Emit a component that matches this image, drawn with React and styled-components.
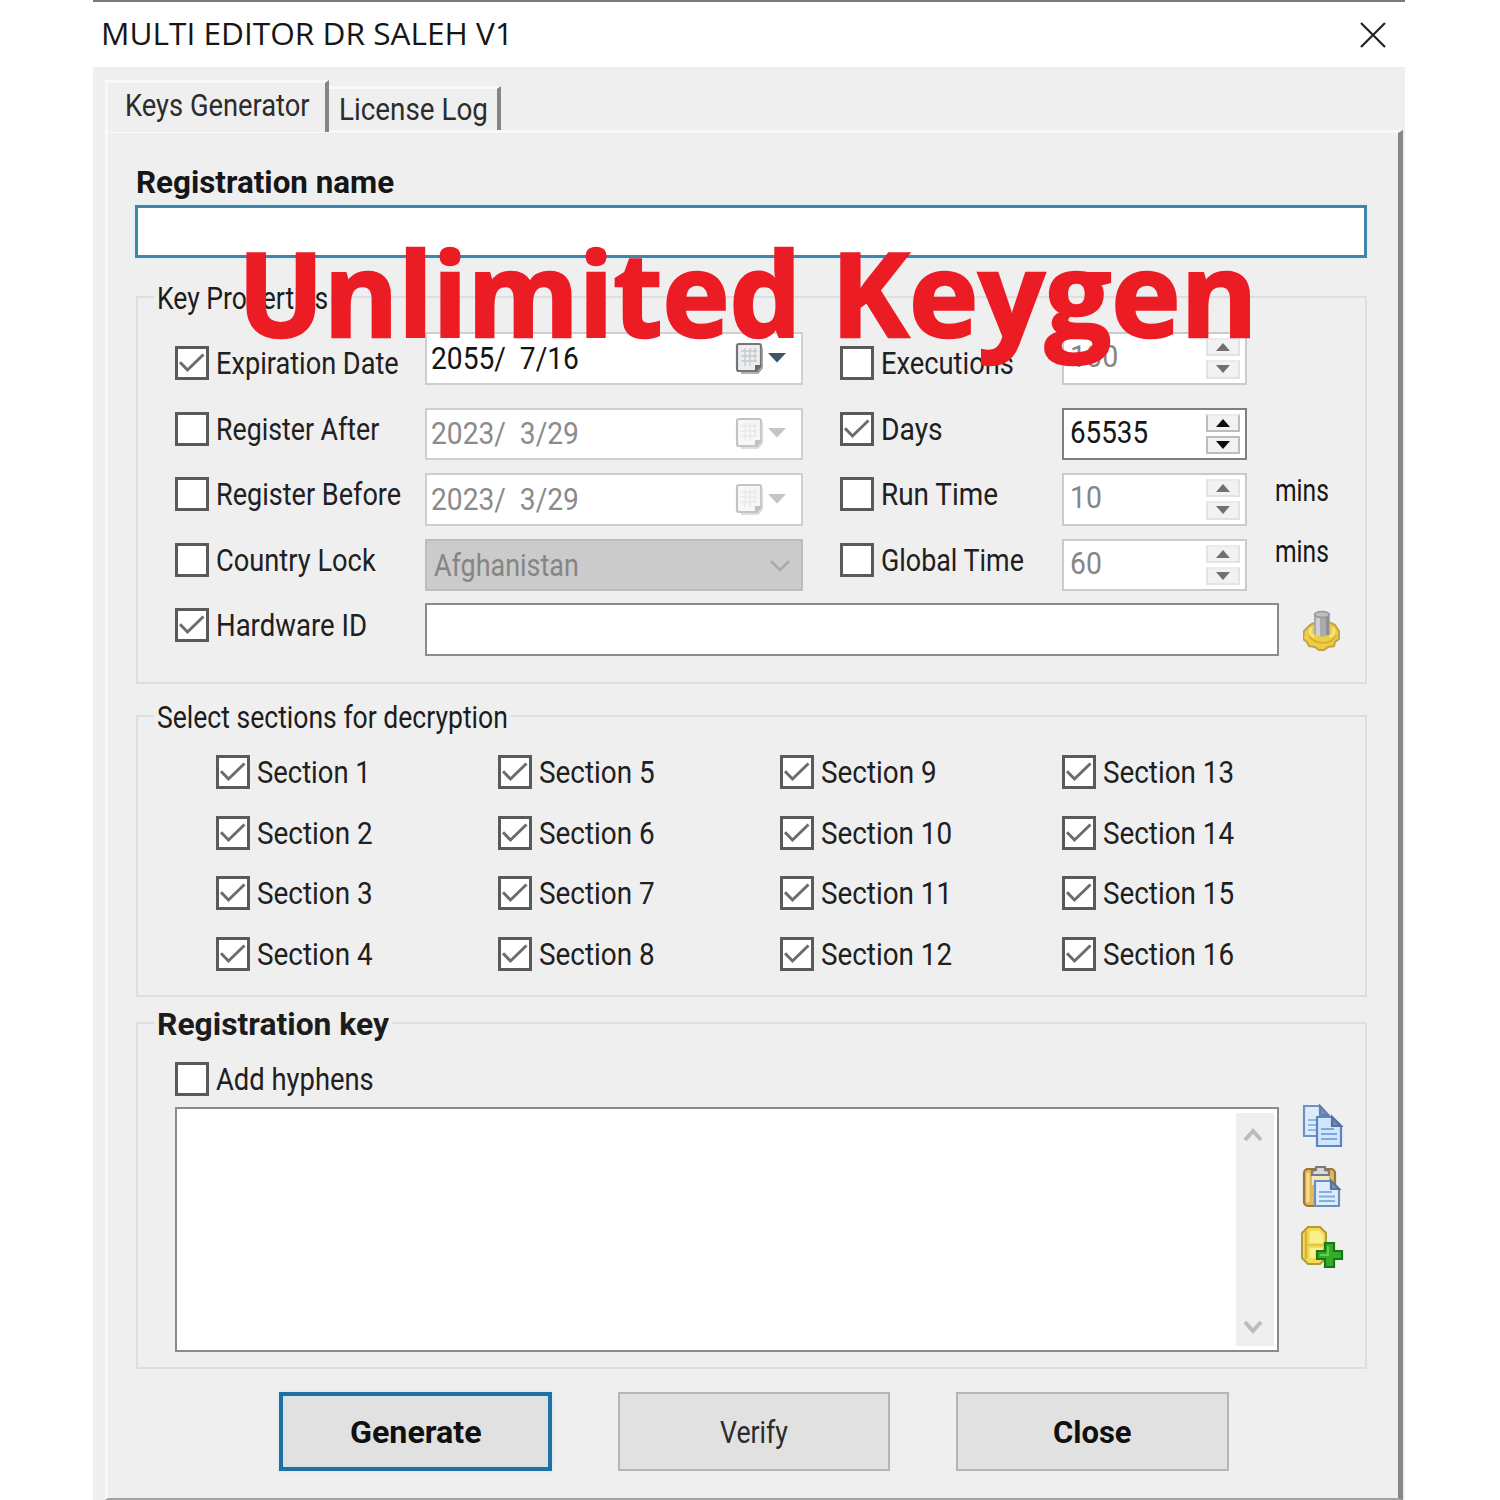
import React, { useLayoutEffect, useRef, useState } from 'react';
import styled, { createGlobalStyle, css } from 'styled-components';

const GlobalStyle = createGlobalStyle`
  * {
    box-sizing: border-box;
  }
  body {
    margin: 0;
    background: #fff;
    color: #161616;
    font-family: Roboto, "Liberation Sans", sans-serif;
    font-size: 31px;
    line-height: 34px;
  }
`;

const Window = styled.div`
  position: relative;
  width: 1312px;
  height: 1500px;
  margin-left: 93px;
  border-top: 2px solid #7b7b7b;
  background: #efefef;
  overflow: hidden;
`;

const TitleBar = styled.header`
  display: flex;
  justify-content: space-between;
  align-items: center;
  height: 65px;
  padding: 0 19px 0 8px;
  background: #fff;
  font-family: "Open Sans", "Noto Sans", sans-serif;
`;

const Title = styled.h1`
  margin: 0 0 4px;
  font: inherit;
`;

const Tabs = styled.nav`
  display: flex;
  align-items: flex-start;
  padding: 13px 0 0 12px;
  height: 63px;
`;

const Tab = styled.div`
  position: relative;
  z-index: ${props => (props.$active ? 1 : 0)};
  width: ${props => (props.$active ? 224 : 172)}px;
  height: ${props => (props.$active ? 52 : 44)}px;
  margin-top: ${props => (props.$active ? 0 : 6)}px;
  padding: ${props => (props.$active ? '6px 0 0 17px' : '4px 0 0 10px')};
  border: 3px solid #f9f9f9;
  border-bottom: 0;
  border-left-width: ${props => (props.$active ? 3 : 0)}px;
  border-right: 4px solid #858585;
  background: #efefef;
  color: #2c2c2c;
`;

const Page = styled.main`
  display: flex;
  flex-direction: column;
  width: 1298px;
  height: 1370px;
  margin-left: 12px;
  padding: 33px 0 0 27px;
  border: 3px solid #f9f9f9;
  border-right: 5px solid #878787;
  border-bottom: 2px solid #a2a2a2;
`;

const NameLabel = styled.div`
  padding-left: 1px;
`;

const FieldBox = styled.div`
  display: flex;
  width: ${props => props.$width}px;
  height: 53px;
  border: 2.5px solid #8b8b8b;
  background: #fff;
`;

const NameField = styled(FieldBox)`
  margin-top: 5px;
  border-width: 3px;
  border-color: #3f86ae;
  box-shadow: 0 0 3px #cfeefc;
`;

const Group = styled.section`
  width: 1231px;
  height: ${props => props.$height}px;
  margin: ${props => props.$top}px 0 0 1px;
  border: 2px solid #dedede;
`;

const Legend = styled.div`
  width: fit-content;
  margin: -16px 0 -1px 16px;
  padding: 0 3px;
  background: #efefef;
  color: #1c1c1c;
`;

const Properties = styled.div`
  display: flex;
  height: 288px;
`;

const CheckColumn = styled.div`
  display: flex;
  flex-direction: column;
  gap: 31.6px;
  width: ${props => props.$width}px;
  padding-left: 37px;
  margin-top: 31px;
`;

const FieldColumn = styled.div`
  display: flex;
  flex-direction: column;
  gap: 13px;
  margin-top: 17px;

  > :first-child {
    margin-bottom: 10px;
  }
`;

const UnitColumn = styled.div`
  display: flex;
  flex-direction: column;
  gap: 27px;
  margin: 159px 0 0 28px;
`;

const CheckLabel = styled.div`
  display: flex;
  align-items: center;
  gap: 7px;
  height: 34px;
  color: #202020;
`;

const Caption = styled.span`
  padding-top: 2px;
`;

const Box = styled.span`
  display: flex;
  flex: none;
  width: 34px;
  height: 34px;
  border: 3px solid #5a5a5a;
  background: #fff;
`;

const thinBorder = css`
  border: 2px solid ${props => (props.$enabled ? '#7f7f7f' : '#cbcbcb')};
`;

const DateField = styled.div`
  display: flex;
  align-items: center;
  justify-content: space-between;
  width: 378px;
  height: 52.5px;
  padding: 1px 15px 0 4px;
  border: 2px solid #cfcfcf;
  background: #fff;
  color: ${props => (props.$enabled ? '#141414' : '#8b8b8b')};
`;

const Country = styled(DateField)`
  padding: 3px 10px 0 7px;
  border-color: #bdbdbd;
  background: #cbcbcb;
  color: #858585;
`;

const SpinField = styled.div`
  display: flex;
  justify-content: space-between;
  width: 184.5px;
  height: 52.5px;
  padding: 4px 5px 4px 6px;
  ${thinBorder}
  background: #fff;
  color: ${props => (props.$enabled ? '#161616' : '#868686')};
`;

const SpinText = styled.div`
  margin-top: 2px;
`;

const SpinButtons = styled.div`
  display: flex;
  flex-direction: column;
  gap: 4px;
  width: 34px;
`;

const SpinButton = styled.div`
  display: flex;
  align-items: center;
  justify-content: center;
  height: 19px;
  border: 2px solid ${props => (props.$enabled ? '#bdbdbd' : '#e3e3e3')};
  border-top-color: ${props => (props.$enabled && props.$down ? '#bdbdbd' : '#ebebeb')};
  background: #f2f2f2;
`;

const HardwareRow = styled.div`
  display: flex;
  padding-left: 37px;

  > :first-child {
    width: 250px;
    margin-top: 5px;
  }
  > svg {
    margin: 7px 0 0 24px;
  }
`;

const Sections = styled.div`
  display: grid;
  grid-template-columns: repeat(4, 282px);
  grid-template-rows: repeat(4, 34px);
  grid-auto-flow: column;
  row-gap: 26.5px;
  margin: 21px 0 0 77.5px;
`;

const KeyBody = styled.div`
  padding: 21px 0 0 37px;
`;

const KeyRow = styled.div`
  display: flex;
  margin-top: 11px;
`;

const KeyArea = styled.div`
  display: flex;
  justify-content: flex-end;
  width: 1104px;
  height: 245px;
  padding: 4px 3px;
  border: 2.5px solid #8b8b8b;
  background: #fff;
`;

const ScrollBar = styled.div`
  display: flex;
  flex-direction: column;
  justify-content: space-between;
  width: 38px;
  padding: 13px 0 11px 7px;
  background: #efefef;
`;

const KeyTools = styled.div`
  display: flex;
  flex-direction: column;
  gap: 16.5px;
  margin: -3px 0 0 21px;
`;

const Actions = styled.footer`
  display: flex;
  gap: 66px;
  margin: 23px 0 0 144px;
`;

const Button = styled.button`
  display: flex;
  align-items: center;
  justify-content: center;
  width: 272.5px;
  height: 79px;
  padding: 3px 0 0;
  border: 2px solid #b5b5b5;
  background: #e1e1e1;
  color: ${props => (props.$strong ? '#101010' : '#2b2b2b')};
  font: inherit;
`;

const PrimaryButton = styled(Button)`
  padding-right: 4px;
  border: 4.5px solid #22709f;
  box-shadow: 0 0 3px #bfe6fb, inset 0 0 4px #bfe6fb;
`;

const Stamp = styled.div`
  position: absolute;
  left: 145px;
  top: 210px;
  display: flex;
  gap: 30px;
  color: #ec1c24;
  font-family: "Open Sans", "Noto Sans", sans-serif;
  font-size: 117px;
  font-weight: 700;
  line-height: 160px;
  -webkit-text-stroke: 2.5px #ec1c24;
`;

const FitBox = styled.span`
  display: block;
  flex: none;
  width: ${props => props.$width}px;
  white-space: pre;
  font-weight: ${props => (props.$bold ? 700 : 'inherit')};
`;

const FitInner = styled.span`
  display: inline-block;
  transform-origin: 0 50%;
`;

// squeezes a caption to a set width, like the old bitmap system font
const Fit = ({ width, bold, children }) => {
  const ref = useRef(null);
  const [scale, setScale] = useState(1);
  useLayoutEffect(() => {
    setScale(width / ref.current.offsetWidth);
  }, [width]);
  return (
    <FitBox $width={width} $bold={bold}>
      <FitInner ref={ref} style={{ transform: `scaleX(${scale})` }}>{children}</FitInner>
    </FitBox>
  );
};

const Check = ({ label, width, checked }) => (
  <CheckLabel>
    <Box>
      {checked && (
        <svg width="28" height="28" fill="none" stroke="#6c6c6c" strokeWidth="3">
          <path d="M2 13.2 9.5 21 25.5 5.5" />
        </svg>
      )}
    </Box>
    <Caption><Fit width={width}>{label}</Fit></Caption>
  </CheckLabel>
);

const Calendar = ({ enabled }) => (
  <svg width="51" height="34" viewBox="0 0 51 34" opacity={enabled ? 1 : 0.42}>
    <path d="M4 2h20q2 0 2 2v20l-4 5H4q-2 0-2-2V4q0-2 2-2Z" fill="#eceef0" stroke="#757575" strokeWidth="2.2" />
    <path d="M6 9h16M6 14h16M6 19h16M10 6v18M15 6v18M20 6v14" stroke="#c6c9cc" strokeWidth="1.3" />
    <path d="M27 6v20l-4 5H6" fill="none" stroke="#999" strokeWidth="1.6" />
    <path d="M20 30v-7h7Z" fill="#6a6a6a" />
    <path d="M33 11h18l-9 9.500Z" fill={enabled ? '#40566b' : '#777'} />
  </svg>
);

const DateInput = ({ value, enabled }) => (
  <DateField $enabled={enabled}>
    <Fit width={148}>{value}</Fit>
    <Calendar enabled={enabled} />
  </DateField>
);

const Spin = ({ value, width, enabled }) => {
  const fill = enabled ? '#0c0c0c' : '#707070';
  return (
    <SpinField $enabled={enabled}>
      <SpinText><Fit width={width}>{value}</Fit></SpinText>
      <SpinButtons>
        <SpinButton $enabled={enabled}>
          <svg width="14" height="8" fill={fill}><path d="M0 8 7 0l7 8Z" /></svg>
        </SpinButton>
        <SpinButton $enabled={enabled} $down>
          <svg width="14" height="8" fill={fill}><path d="M0 0h14L7 8Z" /></svg>
        </SpinButton>
      </SpinButtons>
    </SpinField>
  );
};

const HardwareIcon = () => (
  <svg width="39" height="43" viewBox="0 0 39 43">
    <path d="M7 15 13 12h13l6 3 4 6v8l-4 3-1 4-6 1-4 3h-5l-4-3-6-1-2-4-4-3 1-8Z" fill="#eccd45" stroke="#c5a342" strokeWidth="2" />
    <path d="M6 25q3 7 13 8 11 0 14-8" fill="none" stroke="#d8b22e" strokeWidth="2" />
    <path d="M8 18q-3 5 3 9M30 18q3 5-3 9" fill="none" stroke="#f8e478" strokeWidth="3" />
    <path d="M11 4v20q8 5 16 0V4Z" fill="#a9a9ae" />
    <path d="M15 6v20" stroke="#cfcfd4" strokeWidth="4" />
    <path d="M24.500 5v20" stroke="#8e8e94" strokeWidth="3" />
    <ellipse cx="19" cy="4.500" rx="7.500" ry="3" fill="#bebec2" stroke="#95959a" strokeWidth="1.500" />
  </svg>
);

const CopyIcon = () => (
  <svg width="44" height="44" viewBox="0 0 44 44" strokeWidth="2.2">
    <path d="M4 2h16l8 9v21H4Z" fill="#dcebfa" stroke="#7390c2" />
    <path d="M20 2v9h8Z" fill="#7890b8" stroke="#667fae" />
    <path d="M8 16h12M8 21h12M8 26h12" stroke="#91b9e8" />
    <path d="M17 13h15l9 9v20H17Z" fill="#d2e6fb" stroke="#5f84c1" />
    <path d="M32 13v9h9Z" fill="#6f8ab8" stroke="#55719f" />
    <path d="M21 25h13M21 30h16M21 35h16" stroke="#79aae4" />
  </svg>
);

const PasteIcon = () => (
  <svg width="44" height="44" viewBox="0 0 44 44" strokeWidth="2.2">
    <rect x="4" y="4" width="31" height="37" rx="4" fill="#e3b75c" stroke="#9a7637" />
    <path d="M8 8v29" stroke="#f8dd92" strokeWidth="3" />
    <path d="M12 10h17v10H12Z" fill="#f4e6c0" />
    <path d="M12 10V6l4-1V2h9v3l4 1v4Z" fill="#d8d8d8" stroke="#777b80" />
    <path d="M15 16h16l8 8v17H15Z" fill="#dfedfb" stroke="#6d8fbe" />
    <path d="M31 16v8h8Z" fill="#7b95bd" stroke="#56749f" />
    <path d="M19 27h13M19 31.500h16M19 36h16" stroke="#7eb0e8" />
  </svg>
);

const AddIcon = () => (
  <svg width="44" height="44" viewBox="0 0 44 44">
    <path d="M2 8 8 2h12l6 6v25l-6 6H8l-6-6Z" fill="#f3dc55" stroke="#b39a38" strokeWidth="2" />
    <path d="M10 6h9l4 4v8H10ZM10 23h12v10H10Z" fill="#fbf08a" />
    <path d="M8 20h17" stroke="#e3c342" strokeWidth="2" />
    <path d="M6 6v28" stroke="#d6b238" strokeWidth="2.500" />
    <path d="M25 18h9v8h8v8h-8v8h-9v-8h-8v-8h8Z" fill="#34ac2a" stroke="#187819" strokeWidth="2.200" />
    <path d="M28 21v9h-8" fill="none" stroke="#66cf4e" strokeWidth="1.800" />
  </svg>
);

const sections = Array.from({ length: 16 }, (_, i) => i + 1);
const sectionWidth = n => (n > 9 ? 131 : n === 1 ? 114 : 116);

const App = () => (
  <>
    <GlobalStyle />
    <Window>
      <TitleBar>
        <Title><Fit width={412}>MULTI EDITOR DR SALEH V1</Fit></Title>
        <svg width="26" height="26" stroke="#222" strokeWidth="2.2">
          <path d="M1 1 25 25M25 1 1 25" />
        </svg>
      </TitleBar>
      <Tabs>
        <Tab $active><Fit width={185}>Keys Generator</Fit></Tab>
        <Tab><Fit width={149}>License Log</Fit></Tab>
      </Tabs>
      <Page>
        <NameLabel><Fit width={258} bold>Registration name</Fit></NameLabel>
        <NameField $width={1232} />

        <Group $height={388} $top={38}>
          <Legend><Fit width={171}>Key Properties</Fit></Legend>
          <Properties>
            <CheckColumn $width={287}>
              <Check label="Expiration Date" width={183} checked />
              <Check label="Register After" width={163} />
              <Check label="Register Before" width={185} />
              <Check label="Country Lock" width={160} />
            </CheckColumn>
            <FieldColumn>
              <DateInput value="2055/  7/16" enabled />
              <DateInput value="2023/  3/29" />
              <DateInput value="2023/  3/29" />
              <Country>
                <Fit width={145}>Afghanistan</Fit>
                <svg width="22" height="14" fill="none" stroke="#aaa" strokeWidth="2.5">
                  <path d="M2 2 11 11 20 2" />
                </svg>
              </Country>
            </FieldColumn>
            <CheckColumn $width={259}>
              <Check label="Executions" width={133} />
              <Check label="Days" width={62} checked />
              <Check label="Run Time" width={117} />
              <Check label="Global Time" width={143} />
            </CheckColumn>
            <FieldColumn>
              <Spin value="100" width={48} />
              <Spin value="65535" width={78} enabled />
              <Spin value="10" width={32} />
              <Spin value="60" width={32} />
            </FieldColumn>
            <UnitColumn>
              <Fit width={54}>mins</Fit>
              <Fit width={54}>mins</Fit>
            </UnitColumn>
          </Properties>
          <HardwareRow>
            <Check label="Hardware ID" width={151} checked />
            <FieldBox $width={854} />
            <HardwareIcon />
          </HardwareRow>
        </Group>

        <Group $height={282} $top={31}>
          <Legend><Fit width={351}>Select sections for decryption</Fit></Legend>
          <Sections>
            {sections.map(n => (
              <Check key={n} label={`Section ${n}`} width={sectionWidth(n)} checked />
            ))}
          </Sections>
        </Group>

        <Group $height={347} $top={25}>
          <Legend><Fit width={232} bold>Registration key</Fit></Legend>
          <KeyBody>
            <Check label="Add hyphens" width={158} />
            <KeyRow>
              <KeyArea>
                <ScrollBar>
                  <svg width="20" height="16" fill="none" stroke="#bcbcbc" strokeWidth="4">
                    <path d="M2 14 10 5 18 14" />
                  </svg>
                  <svg width="20" height="16" fill="none" stroke="#bcbcbc" strokeWidth="4">
                    <path d="M2 3 10 12 18 3" />
                  </svg>
                </ScrollBar>
              </KeyArea>
              <KeyTools>
                <CopyIcon />
                <PasteIcon />
                <AddIcon />
              </KeyTools>
            </KeyRow>
          </KeyBody>
        </Group>

        <Actions>
          <PrimaryButton $strong><Fit width={132} bold>Generate</Fit></PrimaryButton>
          <Button><Fit width={68}>Verify</Fit></Button>
          <Button $strong><Fit width={79} bold>Close</Fit></Button>
        </Actions>
      </Page>
      <Stamp>
        <Fit width={563}>Unlimited</Fit>
        <Fit width={427}>Keygen</Fit>
      </Stamp>
    </Window>
  </>
);

export default App;
